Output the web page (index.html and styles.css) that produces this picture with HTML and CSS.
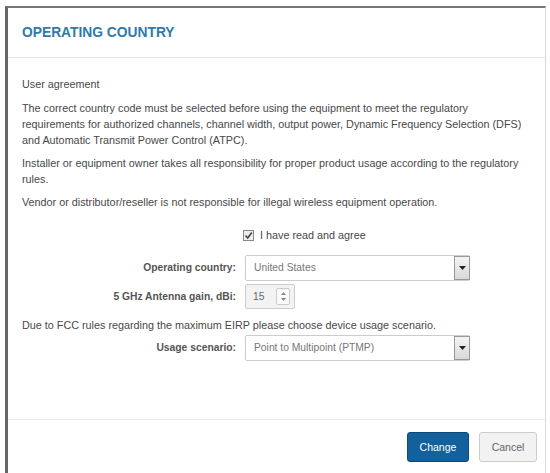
FILE: index.html
```html
<!DOCTYPE html>
<html>
<head>
<meta charset="utf-8">
<link rel="stylesheet" href="styles.css">
</head>
<body>
<div class="dialog">
  <div class="header"><h1 class="title">OPERATING COUNTRY</h1></div>
  <div class="body">
    <p class="subhead">User agreement</p>
    <p class="para">The correct country code must be selected before using the equipment to meet the regulatory requirements for authorized channels, channel width, output power, Dynamic Frequency Selection (DFS) and Automatic Transmit Power Control (ATPC).</p>
    <p class="para">Installer or equipment owner takes all responsibility for proper product usage according to the regulatory rules.</p>
    <p class="para">Vendor or distributor/reseller is not responsible for illegal wireless equipment operation.</p>
    <div class="agree">
      <span class="check"><svg width="9" height="9" viewBox="0 0 9 9"><path d="M1.5 4.5 L3.7 7 L7.8 1.5" fill="none" stroke="#444" stroke-width="1.6"/></svg></span>
      <span>I have read and agree</span>
    </div>
    <div class="row row-country">
      <label class="lbl">Operating country:</label>
      <div class="select wide"><span class="val">United States</span><span class="arrow"><svg width="7" height="4" viewBox="0 0 7 4"><path d="M0 0 H7 L3.5 4 Z" fill="#222"/></svg></span></div>
    </div>
    <div class="row row-gain">
      <label class="lbl">5 GHz Antenna gain, dBi:</label>
      <div class="spin"><span class="val">15</span><span class="spinbtn"><svg width="7" height="11" viewBox="0 0 7 11"><path d="M3.5 1 L6 4 H1 Z" fill="#888"/><path d="M3.5 10 L6 7 H1 Z" fill="#888"/></svg></span></div>
    </div>
    <p class="note">Due to FCC rules regarding the maximum EIRP please choose device usage scenario.</p>
    <div class="row row-usage">
      <label class="lbl">Usage scenario:</label>
      <div class="select wide"><span class="val">Point to Multipoint (PTMP)</span><span class="arrow"><svg width="7" height="4" viewBox="0 0 7 4"><path d="M0 0 H7 L3.5 4 Z" fill="#222"/></svg></span></div>
    </div>
  </div>
  <div class="footer">
    <button class="btn primary">Change</button>
    <button class="btn cancel">Cancel</button>
  </div>
</div>
</body>
</html>
```

FILE: styles.css
```css
html, body {
  margin: 0;
  padding: 0;
  background: #fff;
}
body {
  font-family: "Liberation Sans", Arial, sans-serif;
  font-size: 10.8px;
  color: #484848;
}
.dialog {
  margin: 6px 0 0 5px;
  width: 541px;
  height: 470px;
  box-sizing: border-box;
  border-left: 3px solid #666;
  border-top: 2px solid #777;
  border-right: 1px solid #d8d8d8;
  display: flex;
  flex-direction: column;
}
.header {
  height: 49px;
  padding: 0 14px;
  display: flex;
  align-items: center;
  border-bottom: 1px solid #e6e6e6;
}
.title {
  margin: 0;
  font-size: 13.8px;
  font-weight: bold;
  color: #2e7aa8;
}
.body {
  flex: 1;
  padding: 18px 12px 0 14px;
  line-height: 16px;
}
p { margin: 0; }
.subhead { margin-bottom: 8px; }
.para { margin-bottom: 7px; }
.agree {
  margin-top: 17px;
  display: flex;
  align-items: center;
  padding-left: 221px;
  gap: 6px;
  height: 16px;
}
.check {
  width: 9px;
  height: 9px;
  border: 1px solid #888;
  background: #eee;
  display: flex;
  align-items: center;
  justify-content: center;
}
.row {
  display: grid;
  grid-template-columns: 214px auto;
  column-gap: 9px;
  align-items: center;
}
.lbl {
  text-align: right;
  font-weight: bold;
  font-size: 10.3px;
  color: #555;
}
.row-country { margin-top: 12px; }
.row-gain { margin-top: 3px; }
.row-usage { margin-top: 2px; }
.select {
  height: 26px;
  box-sizing: border-box;
  border: 1px solid #ccc;
  border-radius: 2px;
  display: flex;
  align-items: center;
  background: #fff;
}
.wide { width: 225px; }
.val {
  flex: 1;
  padding-left: 8px;
  color: #777;
  font-size: 10.3px;
}
.arrow {
  width: 16px;
  height: 24px;
  margin-right: -1px;
  border: 1px solid #999;
  box-sizing: border-box;
  background: linear-gradient(#f4f4f4, #d8d8d8);
  display: flex;
  align-items: center;
  justify-content: center;
}
.spin {
  width: 50px;
  height: 25px;
  box-sizing: border-box;
  border: 1px solid #ccc;
  border-radius: 2px;
  background: #f3f3f3;
  display: flex;
  align-items: center;
}
.spin .val { padding-left: 7px; color: #666; }
.spinbtn {
  width: 12px;
  height: 15px;
  margin-right: 4px;
  border: 1px solid #ccc;
  border-radius: 2px;
  background: #fafafa;
  display: flex;
  align-items: center;
  justify-content: center;
}
.note { margin-top: 8px; }
.footer {
  height: 57px;
  border-top: 1px solid #ececec;
  display: flex;
  justify-content: flex-end;
  align-items: flex-start;
  padding: 12px 8px 0 0;
  gap: 10px;
  box-sizing: border-box;
}
.btn {
  font-family: "Liberation Sans", Arial, sans-serif;
  font-size: 10.5px;
  height: 30px;
  width: 58px;
  padding: 0;
  border: 1px solid #ccc;
  border-radius: 3px;
  background: #f2f2f2;
  color: #666;
}
.btn.primary {
  width: 62px;
  background: #12609c;
  border-color: #0b4a7a;
  color: #fff;
}
```
